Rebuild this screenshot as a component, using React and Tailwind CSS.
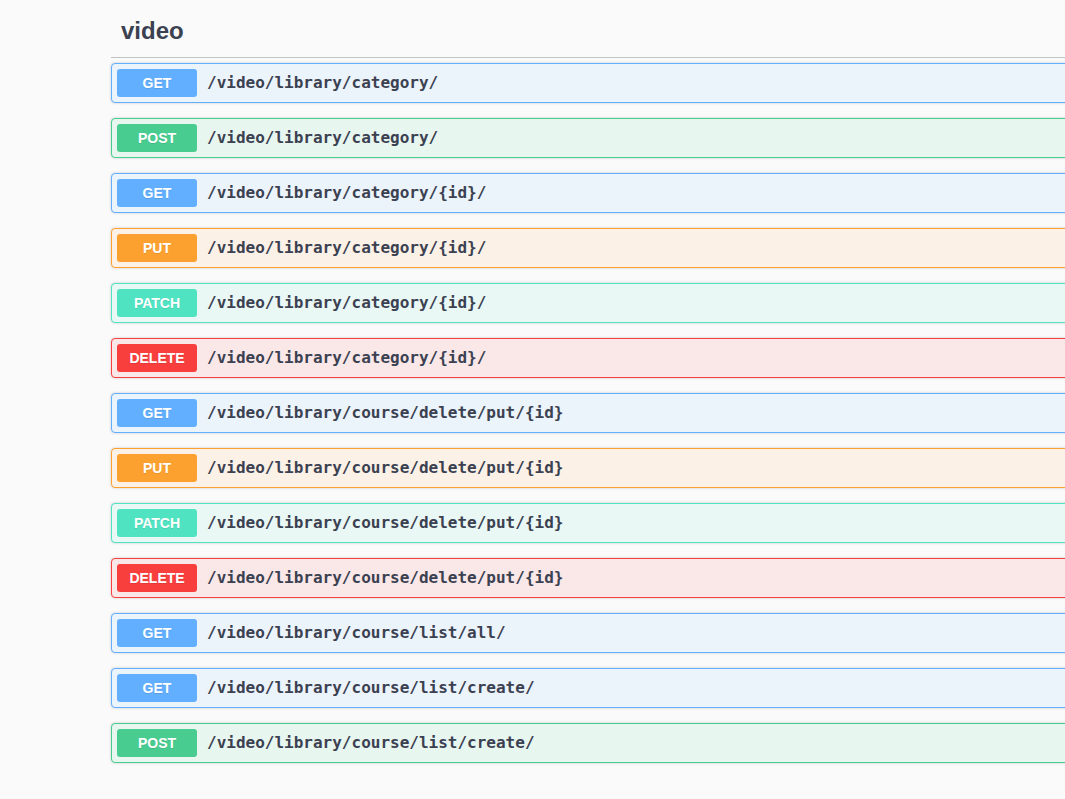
const methodStyles = {
  GET: { row: 'border-[#61affe] bg-[#ebf3fb]', badge: 'bg-[#61affe]' },
  POST: { row: 'border-[#49cc90] bg-[#e8f6f0]', badge: 'bg-[#49cc90]' },
  PUT: { row: 'border-[#fca130] bg-[#fbf1e6]', badge: 'bg-[#fca130]' },
  PATCH: { row: 'border-[#50e3c2] bg-[#e9f8f5]', badge: 'bg-[#50e3c2]' },
  DELETE: { row: 'border-[#f93e3e] bg-[#fae7e7]', badge: 'bg-[#f93e3e]' },
}

const endpoints = [
  ['GET', '/video/library/category/'],
  ['POST', '/video/library/category/'],
  ['GET', '/video/library/category/{id}/'],
  ['PUT', '/video/library/category/{id}/'],
  ['PATCH', '/video/library/category/{id}/'],
  ['DELETE', '/video/library/category/{id}/'],
  ['GET', '/video/library/course/delete/put/{id}'],
  ['PUT', '/video/library/course/delete/put/{id}'],
  ['PATCH', '/video/library/course/delete/put/{id}'],
  ['DELETE', '/video/library/course/delete/put/{id}'],
  ['GET', '/video/library/course/list/all/'],
  ['GET', '/video/library/course/list/create/'],
  ['POST', '/video/library/course/list/create/'],
]

const Operation = ({ method, path }) => {
  const style = methodStyles[method]
  return (
    <div
      className={`mb-[15px] rounded border ${style.row} shadow-[0_0_3px_rgba(0,0,0,0.19)]`}
    >
      <div className="flex items-center p-[5px]">
        <span
          className={`min-w-[80px] rounded-[3px] py-[6px] text-center text-[14px] font-bold leading-4 text-white ${style.badge} [text-shadow:0_1px_0_rgba(0,0,0,0.1)]`}
          style={{ fontFamily: '"Liberation Sans", Arial, sans-serif' }}
        >
          {method}
        </span>
        <span
          className="px-[10px] text-[16px] font-semibold text-[#3b4151]"
          style={{ fontFamily: '"DejaVu Sans Mono", monospace' }}
        >
          {path}
        </span>
      </div>
    </div>
  )
}

const App = () => {
  return (
    <div className="min-h-screen w-full overflow-hidden bg-[#fafafa]">
      <div className="ml-[111px] w-[1000px]">
        <h3
          className="mb-[5px] border-b border-[rgba(59,65,81,0.3)] pb-[12px] pl-[10px] pt-[17px] text-[24px] font-bold leading-[28px] text-[#3b4151]"
          style={{ fontFamily: '"Liberation Sans", Arial, sans-serif' }}
        >
          video
        </h3>
        {endpoints.map(([method, path], i) => (
          <Operation key={i} method={method} path={path} />
        ))}
      </div>
    </div>
  )
}

export default App
